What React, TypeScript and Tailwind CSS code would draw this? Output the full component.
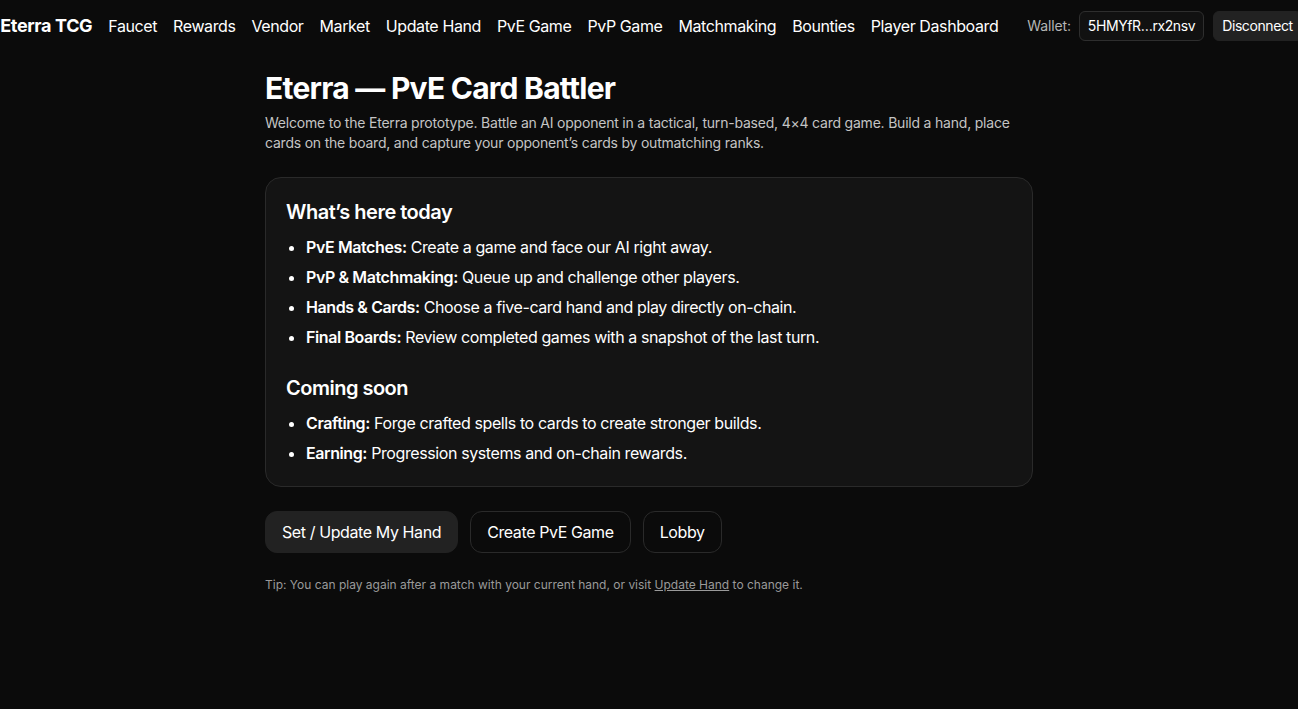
import React from 'react'

const links = [
  'Faucet',
  'Rewards',
  'Vendor',
  'Market',
  'Update Hand',
  'PvE Game',
  'PvP Game',
  'Matchmaking',
  'Bounties',
  'Player Dashboard',
]

const today = [
  { label: 'PvE Matches:', text: 'Create a game and face our AI right away.' },
  { label: 'PvP & Matchmaking:', text: 'Queue up and challenge other players.' },
  { label: 'Hands & Cards:', text: 'Choose a five-card hand and play directly on-chain.' },
  { label: 'Final Boards:', text: 'Review completed games with a snapshot of the last turn.' },
]

const soon = [
  { label: 'Crafting:', text: 'Forge crafted spells to cards to create stronger builds.' },
  { label: 'Earning:', text: 'Progression systems and on-chain rewards.' },
]

function FeatureList({ items }: { items: { label: string; text: string }[] }) {
  return (
    <ul className="mt-[9px] list-disc pl-5 space-y-1.5 text-base leading-6 text-white">
      {items.map((item) => (
        <li key={item.label}>
          <span className="font-semibold">{item.label}</span> {item.text}
        </li>
      ))}
    </ul>
  )
}

export default function App() {
  return (
    <div className="min-h-[709px] bg-[#0b0b0b] text-white tracking-[-0.025em] font-['Inter','Noto_Sans',sans-serif]">
      <nav className="flex h-[52px] items-center justify-center overflow-hidden">
        <div className="flex shrink-0 items-center gap-4 pl-1">
          <span className="text-lg font-bold tracking-[-0.02em]">Eterra TCG</span>
          {links.map((link) => (
            <a key={link} className="text-base text-white">
              {link}
            </a>
          ))}
          <div className="ml-[13px] flex items-center gap-2">
            <span className="text-sm tracking-[-0.01em] text-[#b5b5b5]">Wallet:</span>
            <span className="rounded-md border border-[#2e2e2e] bg-[#111] px-2 py-1 text-sm leading-5">
              5HMYfR…rx2nsv
            </span>
            <button className="ml-px rounded-md border border-[#222] bg-[#222] px-2 py-1 text-sm leading-5">
              Disconnect
            </button>
          </div>
        </div>
      </nav>

      <main className="mx-auto max-w-3xl pt-[18px]">
        <h1 className="text-3xl font-bold tracking-tight">Eterra — PvE Card Battler</h1>
        <p className="mt-[7px] text-sm leading-5 tracking-[-0.015em] text-[#c4c4c4]">
          Welcome to the Eterra prototype. Battle an AI opponent in a tactical, turn-based, 4×4 card game. Build a hand,
          place cards on the board, and capture your opponent’s cards by outmatching ranks.
        </p>

        <section className="mt-6 rounded-2xl border border-[#2a2a2a] bg-[#141414] px-5 pt-5 pb-[21px]">
          <h2 className="text-xl leading-7 font-semibold tracking-[-0.025em]">What’s here today</h2>
          <FeatureList items={today} />
          <h2 className="mt-[25px] text-xl leading-7 font-semibold tracking-[-0.025em]">Coming soon</h2>
          <FeatureList items={soon} />
        </section>

        <div className="mt-6 flex gap-3">
          <button className="rounded-xl border border-[#222] bg-[#222] px-4 py-2 text-base">Set / Update My Hand</button>
          <button className="rounded-xl border border-[#2a2a2a] px-4 py-2 text-base">Create PvE Game</button>
          <button className="rounded-xl border border-[#2a2a2a] px-4 py-2 text-base">Lobby</button>
        </div>

        <p className="mt-6 text-xs leading-4 tracking-normal text-[#9a9a9a]">
          Tip: You can play again after a match with your current hand, or visit{' '}
          <a className="underline">Update Hand</a> to change it.
        </p>
      </main>
    </div>
  )
}
